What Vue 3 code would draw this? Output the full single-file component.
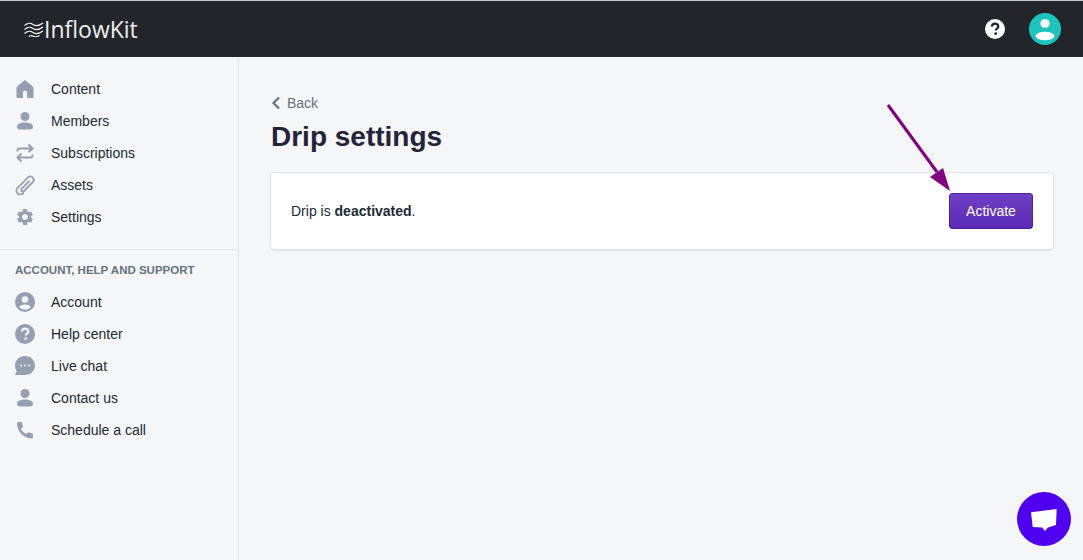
<template>
  <div class="page">
    <header class="topbar">
      <div class="brand">
        <svg class="waves" viewBox="0 0 20 16" width="20" height="16">
          <path d="M.5 4.500c3.500-3 5.500-3 8.500-1s5.500 1.800 10-1.500M.5 8.500c3.500-3 5.500-3 8.500-1s5.500 1.800 10-1.500M.5 12.500c3.500-3 5.500-3 8.500-1s5.500 1.800 10-1.500M5 15.500c1.500-1 3-1 4.500-.2s3.500.8 6-.8" />
        </svg>
        <span class="brand-name">InflowKit</span>
      </div>
      <div class="top-actions">
        <svg class="help" viewBox="0 0 20 20" width="20" height="20">
          <circle cx="10" cy="10" r="10" fill="#fff" />
          <path d="M6.800 7.600c.2-1.900 1.500-2.900 3.300-2.900 1.900 0 3.200 1.100 3.200 2.700 0 1.300-.8 1.900-1.600 2.500-.7.500-1 .8-1 1.600" fill="none" stroke="#212529" stroke-width="2.200" />
          <circle cx="10.700" cy="14.600" r="1.400" fill="#212529" />
        </svg>
        <div class="avatar">
          <svg viewBox="0 0 32 32" width="32" height="32">
            <circle cx="16" cy="10.500" r="4.600" fill="#fff" />
            <ellipse cx="16" cy="23" rx="9.500" ry="4.300" fill="#fff" />
          </svg>
        </div>
      </div>
    </header>

    <div class="body">
      <aside class="sidebar">
        <nav class="nav">
          <a v-for="item in mainLinks" :key="item.label" class="nav-item">
            <span class="nav-icon" v-html="icons[item.icon]"></span>
            <span>{{ item.label }}</span>
          </a>
        </nav>
        <div class="nav-divider"></div>
        <h2 class="nav-title">Account, help and support</h2>
        <nav class="nav nav-lower">
          <a v-for="item in supportLinks" :key="item.label" class="nav-item">
            <span class="nav-icon" v-html="icons[item.icon]"></span>
            <span>{{ item.label }}</span>
          </a>
        </nav>
      </aside>

      <main class="content">
        <a class="back">
          <svg viewBox="0 0 10 14" width="10" height="14">
            <path d="M8 1.500 2.500 7 8 12.500" fill="none" stroke="#637381" stroke-width="2.200" />
          </svg>
          <span>Back</span>
        </a>
        <h1 class="title">Drip settings</h1>
        <section class="card">
          <p class="status">Drip is <strong>deactivated</strong>.</p>
          <button class="activate" type="button">Activate</button>
        </section>
      </main>
    </div>

    <svg class="arrow" viewBox="0 0 90 100" width="90" height="100">
      <line x1="4" y1="4" x2="53" y2="71" stroke="#800080" stroke-width="3" />
      <polygon points="66,90 46,76 59,67" fill="#800080" />
    </svg>

    <div class="chat">
      <svg viewBox="0 0 26 22" width="26" height="22">
        <path d="M0 3.300 25.700 0 25 16 17 18.500 14 22 11 18.500 1.700 18Z" fill="#fff" />
      </svg>
    </div>
  </div>
</template>

<script setup>
const grey = '#959fb1'

const mainLinks = [
  { label: 'Content', icon: 'home' },
  { label: 'Members', icon: 'user' },
  { label: 'Subscriptions', icon: 'swap' },
  { label: 'Assets', icon: 'clip' },
  { label: 'Settings', icon: 'gear' },
]

const supportLinks = [
  { label: 'Account', icon: 'account' },
  { label: 'Help center', icon: 'help' },
  { label: 'Live chat', icon: 'chat' },
  { label: 'Contact us', icon: 'user' },
  { label: 'Schedule a call', icon: 'phone' },
]

const svg = (body) => `<svg viewBox="0 0 20 20" width="20" height="20" style="display:block">${body}</svg>`

const icons = {
  home: svg(`<path d="M10 1.500 2.800 7.500Q2 8.200 2 9.200V18.500H7.500V13.500Q7.500 11 10 11T12.500 13.500V18.500H18V9.200Q18 8.200 17.200 7.500Z" fill="${grey}" stroke="${grey}" stroke-linejoin="round"/>`),
  user: svg(`<circle cx="10" cy="5.500" r="4.500" fill="${grey}"/><path d="M2 16C2 13 5 11.500 10 11.500S18 13 18 16 15 18.500 10 18.500 2 19 2 16Z" fill="${grey}"/>`),
  swap: svg(`<path d="M2.500 8.500V7.500Q2.500 5.500 4.500 5.500H17M13.500 1.500 17.500 5.500 13.500 9M17.500 11.500V12.500Q17.500 14.500 15.500 14.500H3M6.500 10.500 2.500 14.500 6.500 18.500" fill="none" stroke="${grey}" stroke-width="2"/>`),
  clip: svg(`<path d="M14 6.500 6.700 13.700a1.600 1.600 0 0 0 2.300 2.300L17.800 7.200a3.400 3.400 0 0 0-4.800-4.800L2.600 12.800a3.900 3.900 0 0 0 5.600 5.500" fill="none" stroke="${grey}" stroke-width="1.800" stroke-linecap="round"/>`),
  gear: `<svg viewBox="0 0 24 24" width="20" height="20" style="display:block"><path fill="${grey}" d="M19.140 12.940c.04-.3.06-.61.06-.94 0-.32-.02-.64-.07-.94l2.030-1.580c.18-.14.23-.41.12-.61l-1.920-3.320c-.12-.22-.37-.29-.59-.22l-2.390.96c-.5-.38-1.030-.7-1.620-.94l-.36-2.540c-.04-.24-.24-.41-.48-.41h-3.840c-.24 0-.43.17-.47.41l-.36 2.540c-.59.24-1.130.57-1.620.94l-2.390-.96c-.22-.08-.47 0-.59.22L2.740 8.870c-.12.21-.08.47.12.61l2.030 1.580c-.05.3-.09.63-.09.94s.02.64.07.94l-2.030 1.580c-.18.14-.23.41-.12.61l1.920 3.320c.12.22.37.29.59.22l2.390-.96c.5.38 1.030.7 1.620.94l.36 2.540c.05.24.24.41.48.41h3.840c.24 0 .44-.17.47-.41l.36-2.540c.59-.24 1.130-.56 1.620-.94l2.390.96c.22.08.47 0 .59-.22l1.920-3.320c.12-.22.07-.47-.12-.61l-2.010-1.580zM12 15.600c-1.980 0-3.600-1.620-3.600-3.600s1.620-3.600 3.600-3.600 3.600 1.620 3.600 3.600-1.620 3.600-3.600 3.600z"/></svg>`,
  account: svg(`<circle cx="10" cy="10" r="10" fill="${grey}"/><circle cx="10" cy="7.500" r="3.300" fill="#f4f6f8"/><path d="M4.200 15.200C5 13.300 7 12.500 10 12.500S15 13.300 15.800 15.200C14.300 16.800 12.300 17.600 10 17.600S5.700 16.800 4.200 15.200Z" fill="#f4f6f8"/>`),
  help: svg(`<circle cx="10" cy="10" r="10" fill="${grey}"/><path d="M6.800 7.600c.2-1.900 1.500-2.900 3.300-2.900 1.900 0 3.200 1.100 3.200 2.700 0 1.300-.8 1.900-1.600 2.500-.7.500-1 .8-1 1.600" fill="none" stroke="#f4f6f8" stroke-width="2.200"/><circle cx="10.700" cy="14.600" r="1.400" fill="#f4f6f8"/>`),
  chat: svg(`<path d="M10 0C15.500 0 20 4.200 20 9.500S15.500 19 10 19H.5Q0 19 .3 18.300L1.800 15.300C.7 13.700 0 11.700 0 9.500 0 4.200 4.500 0 10 0Z" fill="${grey}"/><circle cx="6" cy="9.500" r="1" fill="#f4f6f8"/><circle cx="10" cy="9.500" r="1" fill="#f4f6f8"/><circle cx="14" cy="9.500" r="1" fill="#f4f6f8"/>`),
  phone: svg(`<path d="M2 3.200Q2 2 3.200 2H6Q7 2 7.200 3L7.800 6.500Q8 7.500 7 8L6 9C7 11 9 13 11 14L12 13Q12.700 12.200 13.700 12.500L17 13.200Q18 13.500 18 14.500V17Q18 18.500 16.500 18.500C8 18 2 11 2 3.200Z" fill="${grey}"/>`),
}
</script>

<style>
html,
body {
  margin: 0;
  background: #f4f6f8;
}
</style>

<style scoped>
.page {
  position: relative;
  height: 560px;
  overflow: hidden;
  display: flex;
  flex-direction: column;
  background: #f4f6f8;
  border-top: 1px solid #c9cbce;
  box-sizing: border-box;
  font-family: "Liberation Sans", Arial, sans-serif;
  font-size: 14px;
  color: #212b36;
}
.topbar {
  flex: 0 0 56px;
  display: flex;
  align-items: center;
  justify-content: space-between;
  padding: 0 22px 0 24px;
  background: #22262b;
}
.brand {
  display: flex;
  align-items: center;
}
.waves {
  fill: none;
  stroke: #f0f0f0;
  stroke-width: 1.200;
}
.brand-name {
  font-family: "Open Sans", sans-serif;
  font-size: 23px;
  color: #eceeef;
}
.top-actions {
  display: flex;
  align-items: center;
  gap: 24px;
}
.help {
  display: block;
}
.avatar {
  width: 32px;
  height: 32px;
  border-radius: 50%;
  background: #1cc4bf;
}
.avatar svg {
  display: block;
}
.body {
  flex: 1;
  display: flex;
  min-height: 0;
}
.sidebar {
  flex: 0 0 238px;
  border-right: 1px solid #e2e5e9;
}
.nav {
  padding-top: 16px;
}
.nav-lower {
  padding-top: 0;
}
.nav-item {
  height: 32px;
  display: flex;
  align-items: center;
  gap: 16px;
  padding-left: 15px;
}
.nav-icon {
  width: 20px;
  height: 20px;
}
.nav-divider {
  margin-top: 16px;
  border-top: 1px solid #e2e5e9;
}
.nav-title {
  margin: 0;
  padding: 14px 15px 9px;
  font-size: 11.5px;
  line-height: 13px;
  font-weight: 700;
  text-transform: uppercase;
  color: #637381;
}
.content {
  flex: 1;
  padding: 36px 30px 0 32px;
  min-width: 0;
}
.back {
  display: flex;
  align-items: center;
  gap: 6px;
  height: 20px;
  color: #637381;
}
.back svg {
  display: block;
}
.title {
  margin: 6px 0 0;
  font-size: 28px;
  line-height: 36px;
  font-weight: 700;
  color: #23233b;
}
.card {
  margin-top: 18px;
  height: 76px;
  box-sizing: border-box;
  padding: 0 20px;
  display: flex;
  align-items: center;
  justify-content: space-between;
  background: #fff;
  border-radius: 3px;
  box-shadow: 0 0 0 1px rgba(63, 63, 68, 0.05), 0 1px 3px 0 rgba(63, 63, 68, 0.15);
}
.status {
  margin: 0;
}
.activate {
  width: 84px;
  height: 36px;
  padding: 0;
  font: inherit;
  color: #fff;
  border: 1px solid #4e1fa0;
  border-radius: 3px;
  background: linear-gradient(180deg, #7040c4, #5c2ab5);
}
.arrow {
  position: absolute;
  left: 884px;
  top: 100px;
}
.chat {
  position: absolute;
  left: 1017px;
  top: 491px;
  width: 54px;
  height: 54px;
  border-radius: 50%;
  background: #4f00f0;
  display: flex;
  align-items: center;
  justify-content: center;
}
.chat svg {
  display: block;
  margin-top: 2px;
}
</style>
